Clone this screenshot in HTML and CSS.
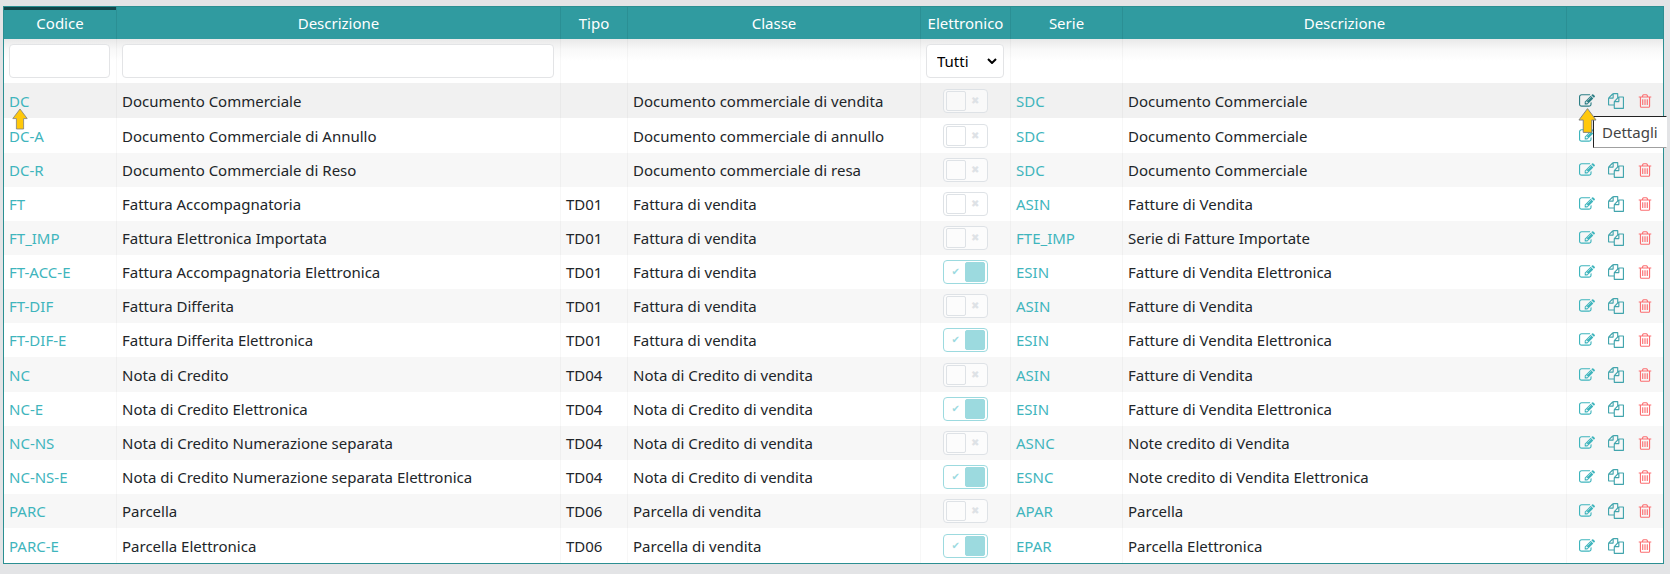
FILE: index.html
```
<!DOCTYPE html>
<html lang="it">
<head>
<meta charset="utf-8">
<title>Tipi documento</title>
<link rel="stylesheet" href="styles.css">
</head>
<body>
<svg class="sprite" aria-hidden="true">
  <symbol id="edit" viewBox="0 0 1792 1792"><path d="M888 1184l116-116-152-152-116 116v56h96v96h56zm440-720q-16-16-33 1l-350 350q-17 17-1 33t33-1l350-350q17-17 1-33zm80 594v190q0 119-84.500 203.500t-203.500 84.500h-832q-119 0-203.500-84.500t-84.500-203.500v-832q0-119 84.500-203.500t203.500-84.500h832q63 0 117 25 15 7 18 23 3 17-9 29l-49 49q-14 14-32 8-23-6-45-6h-832q-66 0-113 47t-47 113v832q0 66 47 113t113 47h832q66 0 113-47t47-113v-126q0-13 9-22l64-64q15-15 35-7t20 29zm-96-738l288 288-672 672h-288v-288zm444 132l-92 92-288-288 92-92q28-28 68-28t68 28l152 152q28 28 28 68t-28 68z"/></symbol>
  <symbol id="copy" viewBox="0 0 1792 1792"><path d="M1696 384q40 0 68 28t28 68v1216q0 40-28 68t-68 28h-960q-40 0-68-28t-28-68v-288h-544q-40 0-68-28t-28-68v-672q0-40 20-88t48-76l408-408q28-28 76-48t88-20h416q40 0 68 28t28 68v328q68-40 128-40h416zm-544 213l-299 299h299v-299zm-640-384l-299 299h299v-299zm196 647l316-316v-416h-384v416q0 40-28 68t-68 28h-416v640h512v-256q0-40 20-88t48-76zm956 804v-1152h-384v416q0 40-28 68t-68 28h-416v640h896z"/></symbol>
  <symbol id="trash" viewBox="0 0 1792 1792"><path d="M704 736v576q0 14-9 23t-23 9h-64q-14 0-23-9t-9-23v-576q0-14 9-23t23-9h64q14 0 23 9t9 23zm256 0v576q0 14-9 23t-23 9h-64q-14 0-23-9t-9-23v-576q0-14 9-23t23-9h64q14 0 23 9t9 23zm256 0v576q0 14-9 23t-23 9h-64q-14 0-23-9t-9-23v-576q0-14 9-23t23-9h64q14 0 23 9t9 23zm128 724v-948h-896v948q0 22 7 40.500t14.500 27 10.500 8.500h832q3 0 10.500-8.500t14.500-27 7-40.500zm-672-1076h448l-48-117q-7-9-17-11h-317q-10 2-17 11zm928 32v64q0 14-9 23t-23 9h-96v948q0 83-47 143.500t-113 60.500h-832q-66 0-113-58.500t-47-141.500v-952h-96q-14 0-23-9t-9-23v-64q0-14 9-23t23-9h309l70-167q15-37 54-63t79-26h320q40 0 79 26t54 63l70 167h309q14 0 23 9t9 23z"/></symbol>
  <symbol id="arrow" viewBox="0 0 20 27"><path d="M10 1L19 13H14.500V26H5.500V13H1Z" fill="#ffc80a" stroke="#7f7f7f" stroke-width="1"/></symbol>
</svg>
<table class="grid">
  <colgroup><col class="c-code"><col><col class="c-type"><col class="c-class"><col class="c-el"><col class="c-series"><col><col class="c-act"></colgroup>
  <thead>
    <tr class="head"><th class="sorted">Codice</th><th>Descrizione</th><th>Tipo</th><th>Classe</th><th>Elettronico</th><th>Serie</th><th>Descrizione</th><th></th></tr>
    <tr class="filters"><td><input class="field" type="text" aria-label="Filtra codice"></td><td><input class="field" type="text" aria-label="Filtra descrizione"></td><td></td><td></td><td><div class="select"><select class="field" aria-label="Filtra elettronico"><option>Tutti</option></select><svg class="chevron" viewBox="0 0 10 6"><path d="M1 1L5 5L9 1" fill="none" stroke="#000" stroke-width="2"/></svg></div></td><td></td><td></td><td></td></tr>
  </thead>
  <tbody>
    <tr class="hover"><td><a href="#">DC</a><svg class="pointer pointer-code"><use href="#arrow"/></svg></td><td>Documento Commerciale</td><td></td><td>Documento commerciale di vendita</td><td><input class="toggle" type="checkbox" aria-label="Elettronico" disabled></td><td><a href="#">SDC</a></td><td>Documento Commerciale</td><td><div class="actions"><button class="active" aria-label="Dettagli"><svg><use href="#edit"/></svg></button><button aria-label="Copia"><svg><use href="#copy"/></svg></button><button class="del" aria-label="Elimina"><svg><use href="#trash"/></svg></button></div><div class="tip" role="tooltip">Dettagli</div><svg class="pointer pointer-edit"><use href="#arrow"/></svg></td></tr>
    <tr><td><a href="#">DC-A</a></td><td>Documento Commerciale di Annullo</td><td></td><td>Documento commerciale di annullo</td><td><input class="toggle" type="checkbox" aria-label="Elettronico" disabled></td><td><a href="#">SDC</a></td><td>Documento Commerciale</td><td><div class="actions"><button aria-label="Dettagli"><svg><use href="#edit"/></svg></button><button aria-label="Copia"><svg><use href="#copy"/></svg></button><button class="del" aria-label="Elimina"><svg><use href="#trash"/></svg></button></div></td></tr>
    <tr><td><a href="#">DC-R</a></td><td>Documento Commerciale di Reso</td><td></td><td>Documento commerciale di resa</td><td><input class="toggle" type="checkbox" aria-label="Elettronico" disabled></td><td><a href="#">SDC</a></td><td>Documento Commerciale</td><td><div class="actions"><button aria-label="Dettagli"><svg><use href="#edit"/></svg></button><button aria-label="Copia"><svg><use href="#copy"/></svg></button><button class="del" aria-label="Elimina"><svg><use href="#trash"/></svg></button></div></td></tr>
    <tr><td><a href="#">FT</a></td><td>Fattura Accompagnatoria</td><td>TD01</td><td>Fattura di vendita</td><td><input class="toggle" type="checkbox" aria-label="Elettronico" disabled></td><td><a href="#">ASIN</a></td><td>Fatture di Vendita</td><td><div class="actions"><button aria-label="Dettagli"><svg><use href="#edit"/></svg></button><button aria-label="Copia"><svg><use href="#copy"/></svg></button><button class="del" aria-label="Elimina"><svg><use href="#trash"/></svg></button></div></td></tr>
    <tr><td><a href="#">FT_IMP</a></td><td>Fattura Elettronica Importata</td><td>TD01</td><td>Fattura di vendita</td><td><input class="toggle" type="checkbox" aria-label="Elettronico" disabled></td><td><a href="#">FTE_IMP</a></td><td>Serie di Fatture Importate</td><td><div class="actions"><button aria-label="Dettagli"><svg><use href="#edit"/></svg></button><button aria-label="Copia"><svg><use href="#copy"/></svg></button><button class="del" aria-label="Elimina"><svg><use href="#trash"/></svg></button></div></td></tr>
    <tr><td><a href="#">FT-ACC-E</a></td><td>Fattura Accompagnatoria Elettronica</td><td>TD01</td><td>Fattura di vendita</td><td><input class="toggle" type="checkbox" aria-label="Elettronico" checked disabled></td><td><a href="#">ESIN</a></td><td>Fatture di Vendita Elettronica</td><td><div class="actions"><button aria-label="Dettagli"><svg><use href="#edit"/></svg></button><button aria-label="Copia"><svg><use href="#copy"/></svg></button><button class="del" aria-label="Elimina"><svg><use href="#trash"/></svg></button></div></td></tr>
    <tr><td><a href="#">FT-DIF</a></td><td>Fattura Differita</td><td>TD01</td><td>Fattura di vendita</td><td><input class="toggle" type="checkbox" aria-label="Elettronico" disabled></td><td><a href="#">ASIN</a></td><td>Fatture di Vendita</td><td><div class="actions"><button aria-label="Dettagli"><svg><use href="#edit"/></svg></button><button aria-label="Copia"><svg><use href="#copy"/></svg></button><button class="del" aria-label="Elimina"><svg><use href="#trash"/></svg></button></div></td></tr>
    <tr><td><a href="#">FT-DIF-E</a></td><td>Fattura Differita Elettronica</td><td>TD01</td><td>Fattura di vendita</td><td><input class="toggle" type="checkbox" aria-label="Elettronico" checked disabled></td><td><a href="#">ESIN</a></td><td>Fatture di Vendita Elettronica</td><td><div class="actions"><button aria-label="Dettagli"><svg><use href="#edit"/></svg></button><button aria-label="Copia"><svg><use href="#copy"/></svg></button><button class="del" aria-label="Elimina"><svg><use href="#trash"/></svg></button></div></td></tr>
    <tr><td><a href="#">NC</a></td><td>Nota di Credito</td><td>TD04</td><td>Nota di Credito di vendita</td><td><input class="toggle" type="checkbox" aria-label="Elettronico" disabled></td><td><a href="#">ASIN</a></td><td>Fatture di Vendita</td><td><div class="actions"><button aria-label="Dettagli"><svg><use href="#edit"/></svg></button><button aria-label="Copia"><svg><use href="#copy"/></svg></button><button class="del" aria-label="Elimina"><svg><use href="#trash"/></svg></button></div></td></tr>
    <tr><td><a href="#">NC-E</a></td><td>Nota di Credito Elettronica</td><td>TD04</td><td>Nota di Credito di vendita</td><td><input class="toggle" type="checkbox" aria-label="Elettronico" checked disabled></td><td><a href="#">ESIN</a></td><td>Fatture di Vendita Elettronica</td><td><div class="actions"><button aria-label="Dettagli"><svg><use href="#edit"/></svg></button><button aria-label="Copia"><svg><use href="#copy"/></svg></button><button class="del" aria-label="Elimina"><svg><use href="#trash"/></svg></button></div></td></tr>
    <tr><td><a href="#">NC-NS</a></td><td>Nota di Credito Numerazione separata</td><td>TD04</td><td>Nota di Credito di vendita</td><td><input class="toggle" type="checkbox" aria-label="Elettronico" disabled></td><td><a href="#">ASNC</a></td><td>Note credito di Vendita</td><td><div class="actions"><button aria-label="Dettagli"><svg><use href="#edit"/></svg></button><button aria-label="Copia"><svg><use href="#copy"/></svg></button><button class="del" aria-label="Elimina"><svg><use href="#trash"/></svg></button></div></td></tr>
    <tr><td><a href="#">NC-NS-E</a></td><td>Nota di Credito Numerazione separata Elettronica</td><td>TD04</td><td>Nota di Credito di vendita</td><td><input class="toggle" type="checkbox" aria-label="Elettronico" checked disabled></td><td><a href="#">ESNC</a></td><td>Note credito di Vendita Elettronica</td><td><div class="actions"><button aria-label="Dettagli"><svg><use href="#edit"/></svg></button><button aria-label="Copia"><svg><use href="#copy"/></svg></button><button class="del" aria-label="Elimina"><svg><use href="#trash"/></svg></button></div></td></tr>
    <tr><td><a href="#">PARC</a></td><td>Parcella</td><td>TD06</td><td>Parcella di vendita</td><td><input class="toggle" type="checkbox" aria-label="Elettronico" disabled></td><td><a href="#">APAR</a></td><td>Parcella</td><td><div class="actions"><button aria-label="Dettagli"><svg><use href="#edit"/></svg></button><button aria-label="Copia"><svg><use href="#copy"/></svg></button><button class="del" aria-label="Elimina"><svg><use href="#trash"/></svg></button></div></td></tr>
    <tr><td><a href="#">PARC-E</a></td><td>Parcella Elettronica</td><td>TD06</td><td>Parcella di vendita</td><td><input class="toggle" type="checkbox" aria-label="Elettronico" checked disabled></td><td><a href="#">EPAR</a></td><td>Parcella Elettronica</td><td><div class="actions"><button aria-label="Dettagli"><svg><use href="#edit"/></svg></button><button aria-label="Copia"><svg><use href="#copy"/></svg></button><button class="del" aria-label="Elimina"><svg><use href="#trash"/></svg></button></div></td></tr>
  </tbody>
</table>
</body>
</html>
```
FILE: styles.css
```
* { box-sizing: border-box; }
body {
  margin: 0;
  padding: 6px 6px 10px 3px;
  background: #e3e4e6;
  color: #212529;
  font: 15px/22px "Noto Sans", sans-serif;
}
.sprite { position: absolute; width: 0; height: 0; }
.grid {
  width: 100%;
  table-layout: fixed;
  border: 1px solid #2b8f92;
  border-spacing: 0;
  background: #fff;
}
.c-code { width: 113px; }
.c-type { width: 67px; }
.c-class { width: 293px; }
.c-el { width: 90px; }
.c-series { width: 112px; }
.c-act { width: 96px; }
th, td {
  padding: 0 5px;
  text-align: left;
  white-space: nowrap;
  border-right: 1px solid rgba(0, 0, 0, 0.03);
}
th:last-child, td:last-child { border-right: 0; }
.head th {
  height: 32px;
  padding: 0;
  background: #309ba0;
  color: #fff;
  font-weight: 400;
  text-align: center;
  border-right-color: #2b8f94;
}
.head .sorted { box-shadow: inset 0 3px #12464a; }
.filters td {
  height: 44px;
  padding: 0 6px 0 5px;
  background: linear-gradient(#e9e9e9, #f8f8f8 10px, #fff 22px);
}
.field {
  display: block;
  width: 100%;
  height: 34px;
  padding: 0 10px;
  border: 1px solid #e3e4e6;
  border-radius: 4px;
  background: #fff;
  color: #000;
  font: inherit;
  appearance: none;
}
.select { position: relative; }
.chevron { position: absolute; right: 7px; top: 14px; width: 10px; height: 6px; }
tbody td { height: 34px; }
tbody tr:nth-child(7n+2) td, tbody tr:first-child td, tbody tr:last-child td { height: 35px; }
tbody tr:first-child td { padding-top: 1px; }
tbody tr:nth-child(odd) { background: #f7f7f7; }
tbody tr.hover { background: #f1f1f1; }
td:first-child, td:last-child { position: relative; }
a { color: #3fb5bd; text-decoration: none; }
.toggle {
  display: flex;
  align-items: center;
  justify-content: space-between;
  width: 45px;
  height: 24px;
  margin: 0 auto;
  padding: 2px;
  border: 1px solid #dee2e6;
  border-radius: 4px;
  background: rgba(255, 255, 255, 0.6);
  color: #dee2e6;
  appearance: none;
}
.toggle::before {
  content: "";
  width: 18px;
  height: 18px;
  border: 1px solid #dee2e6;
  border-radius: 2px;
}
.toggle::after {
  content: "✖";
  width: 20px;
  font: bold 10px/18px "DejaVu Sans", sans-serif;
  text-align: center;
}
.toggle:checked { flex-direction: row-reverse; border-color: #9cdadf; color: #9cdadf; }
.toggle:checked::before { border-color: #9cdadf; background: #9cdadf; }
.toggle:checked::after { content: "✔"; }
.actions { display: flex; gap: 13px; padding-left: 7px; }
.actions button { display: flex; padding: 0; border: 0; background: none; color: #3fb5bd; }
.actions button:nth-child(2) { color: #42a5ad; }
.actions .active { color: #2d7f86; }
.actions .del { color: #fb6f72; }
.actions svg { width: 16px; height: 16px; fill: currentColor; }
.tip {
  position: absolute;
  z-index: 1;
  left: 26px;
  top: 33px;
  padding: 4px 8px;
  border: 1px solid #222;
  border-right-color: #fff;
  border-bottom-color: #a0a0a0;
  background: #fff;
  color: #444;
}
.pointer { position: absolute; z-index: 2; }
.pointer-code { left: 8px; top: 25px; width: 16px; height: 22px; }
.pointer-edit { left: 11px; top: 24px; width: 19px; height: 27px; }
```
